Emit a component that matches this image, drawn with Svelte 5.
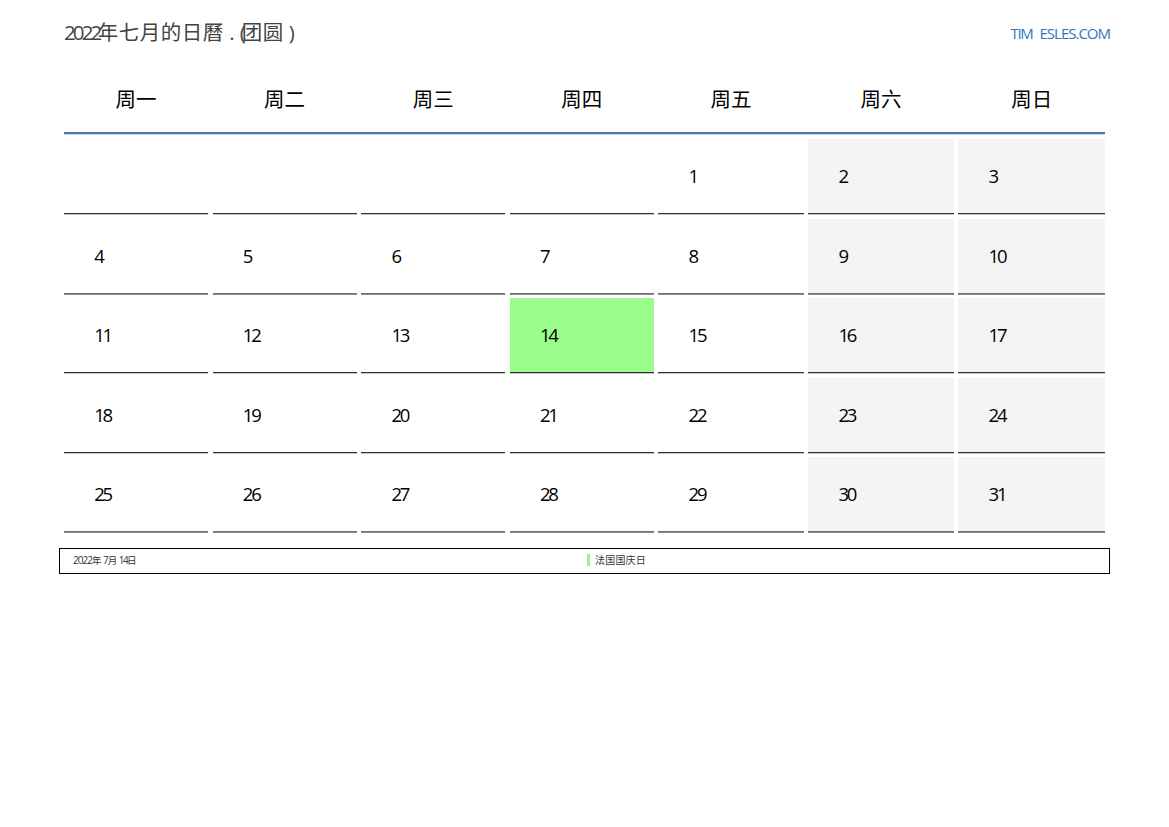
<script>
  const days = ['周一','周二','周三','周四','周五','周六','周日'];
  const cells = [null,null,null,null,1,2,3];
  for (let d = 4; d <= 31; d++) cells.push(d);
  const isWeekend = (i) => i % 7 >= 5;
  const softRows = [1, 4];
  const isSoft = (i) => softRows.includes(Math.floor(i / 7));
</script>

<div class="page">
  <header class="top">
    <h1 class="title"><span class="num">2022</span><span class="nian">年</span><span class="cjk">七月的日曆</span><span class="dot">.</span><span class="paren">(</span><span class="cjk">团圆</span><span class="close">)</span></h1>
    <a class="site" href="#top"><span class="tim">TIM</span><span class="rest">ESLES.COM</span></a>
  </header>

  <div class="calendar">
    <div class="heads">
      {#each days as d}<div class="head">{d}</div>{/each}
    </div>
    <div class="rule"></div>
    <div class="grid">
      {#each cells as c, i}
        <div class="cell" class:weekend={isWeekend(i)} class:today={c === 14} class:soft={isSoft(i)}>{#if c}<span>{c}</span>{/if}</div>
      {/each}
    </div>
  </div>

  <div class="notes">
    <div class="note-date"><span>2022</span><i>年</i> <span>7</span><i>月</i> <span class="tight">14</span><i>日</i></div>
    <div class="note-text"><span class="bar"></span>法国国庆日</div>
  </div>
</div>

<style>
  :global(body) {
    margin: 0;
    background: #fff;
  }
  .page {
    width: 1169px;
    height: 827px;
    box-sizing: border-box;
    padding: 18px 59px 0;
    font-family: "Open Sans", "Noto Sans CJK SC", sans-serif;
    color: #000;
    overflow: hidden;
  }
  .top {
    display: flex;
    justify-content: space-between;
    align-items: center;
    height: 28px;
    padding-left: 5px;
  }
  .title {
    margin: 0;
    font-size: 20.5px;
    font-weight: 400;
    color: #444;
    line-height: 28px;
    white-space: pre;
  }
  .num { letter-spacing: -2.9px; }
  .nian { letter-spacing: 0.5px; margin-left: -1.5px; }
  .cjk { letter-spacing: 0.5px; }
  .dot { margin-left: 5.5px; }
  .paren { letter-spacing: -4px; margin-left: 5px; }
  .close { margin-left: 5px; }
  .site {
    display: flex;
    font-size: 15px;
    color: #2f76bd;
    text-decoration: none;
    position: relative;
    top: 1px;
  }
  .tim { letter-spacing: -1.3px; margin-right: 7px; }
  .rest { letter-spacing: -1px; }
  .calendar {
    margin-left: 5px;
    width: fit-content;
  }
  .heads, .grid {
    display: grid;
    grid-template-columns: 144px 144px 144px 144px 145.3px 145.5px 146.8px;
    column-gap: 4.6px;
  }
  .heads {
    margin-top: 29px;
    height: 57px;
    align-items: center;
  }
  .head {
    text-align: center;
    font-size: 20.5px;
    line-height: 28px;
    padding-bottom: 10px;
  }
  .rule {
    height: 2px;
    background: #55779f;
    box-shadow: 0 1px 0 rgba(85, 119, 159, 0.3);
  }
  .grid {
    margin-top: 5px;
    grid-auto-rows: 75px;
    row-gap: 4.55px;
  }
  .cell {
    border-bottom: 1px solid #333;
    box-shadow: 0 1px 0 #c4c4c4;
    box-sizing: border-box;
    display: flex;
    align-items: center;
    padding: 0 0 1px 30.2px;
    font-size: 18.5px;
    letter-spacing: -2.2px;
  }
  .cell.soft {
    border-bottom-color: #707070;
    box-shadow: 0 1px 0 #8a8a8a;
  }
  .weekend { background: #f4f4f4; }
  .today { background: #9bfd8b; }
  .notes {
    margin-top: 16px;
    height: 26px;
    box-sizing: border-box;
    border: 1.4px solid #000;
    padding-bottom: 3px;
    display: flex;
    align-items: center;
    font-size: 10px;
    color: #333;
  }
  .note-date {
    width: 514px;
    padding-left: 13px;
    letter-spacing: -1px;
    white-space: pre;
  }
  .note-date i { font-style: normal; font-size: 9.5px; letter-spacing: 0; }
  .note-date .tight { letter-spacing: -1.6px; }
  .note-text {
    display: flex;
    align-items: center;
    letter-spacing: 0.2px;
  }
  .bar {
    width: 3px;
    height: 12px;
    background: #a5ee8e;
    margin-right: 5px;
  }
</style>
